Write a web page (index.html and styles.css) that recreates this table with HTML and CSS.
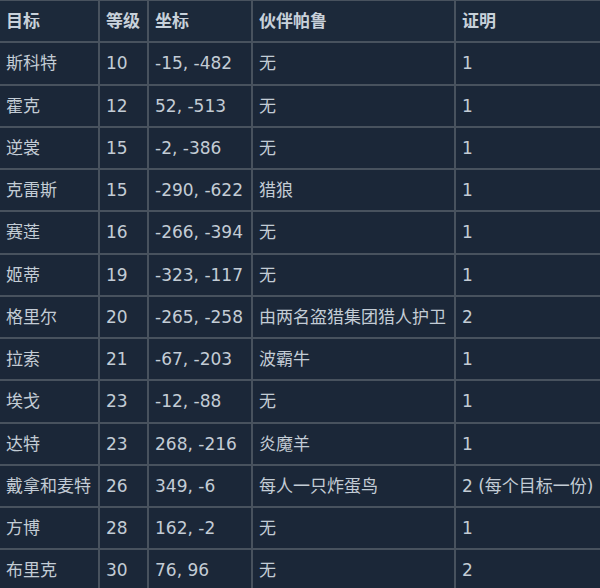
FILE: index.html
```html
<!DOCTYPE html>
<html lang="zh">
<head>
<meta charset="utf-8">
<link rel="stylesheet" href="styles.css">
</head>
<body>
<table class="targets">
  <colgroup>
    <col class="c-name"><col class="c-lvl"><col class="c-pos"><col class="c-pal"><col class="c-proof">
  </colgroup>
  <thead>
    <tr><th>目标</th><th>等级</th><th>坐标</th><th>伙伴帕鲁</th><th>证明</th></tr>
  </thead>
  <tbody>
    <tr><td>斯科特</td><td>10</td><td>-15, -482</td><td>无</td><td>1</td></tr>
    <tr><td>霍克</td><td>12</td><td>52, -513</td><td>无</td><td>1</td></tr>
    <tr><td>逆裳</td><td>15</td><td>-2, -386</td><td>无</td><td>1</td></tr>
    <tr><td>克雷斯</td><td>15</td><td>-290, -622</td><td>猎狼</td><td>1</td></tr>
    <tr><td>赛莲</td><td>16</td><td>-266, -394</td><td>无</td><td>1</td></tr>
    <tr><td>姬蒂</td><td>19</td><td>-323, -117</td><td>无</td><td>1</td></tr>
    <tr><td>格里尔</td><td>20</td><td>-265, -258</td><td>由两名盗猎集团猎人护卫</td><td>2</td></tr>
    <tr><td>拉索</td><td>21</td><td>-67, -203</td><td>波霸牛</td><td>1</td></tr>
    <tr><td>埃戈</td><td>23</td><td>-12, -88</td><td>无</td><td>1</td></tr>
    <tr><td>达特</td><td>23</td><td>268, -216</td><td>炎魔羊</td><td>1</td></tr>
    <tr><td>戴拿和麦特</td><td>26</td><td>349, -6</td><td>每人一只炸蛋鸟</td><td>2 (每个目标一份)</td></tr>
    <tr><td>方博</td><td>28</td><td>162, -2</td><td>无</td><td>1</td></tr>
    <tr><td>布里克</td><td>30</td><td>76, 96</td><td>无</td><td>2</td></tr>
  </tbody>
</table>
</body>
</html>
```
FILE: styles.css
```css
html, body {
  margin: 0;
  padding: 0;
  background: #1b2738;
  overflow: hidden;
}
body {
  font-family: "DejaVu Sans", "Noto Sans CJK SC", sans-serif;
  color: #c3ccd5;
  font-size: 17px;
}
.targets {
  border-collapse: collapse;
  table-layout: fixed;
  width: 602px;
  margin-top: -1px;
}
.c-name { width: 99px; }
.c-lvl { width: 49px; }
.c-pos { width: 104px; }
.c-pal { width: 203px; }
.c-proof { width: 147px; }
.targets th,
.targets td {
  border: 2px solid #48525e;
  height: 40.25px;
  padding: 0 0 0 6px;
  text-align: left;
  white-space: nowrap;
  overflow: hidden;
  line-height: 20px;
  vertical-align: middle;
}
.targets td:first-child,
.targets th:first-child { border-left: none; }
.targets th {
  font-weight: bold;
  color: #c8d1da;
  background: #1c293a;
}
```
